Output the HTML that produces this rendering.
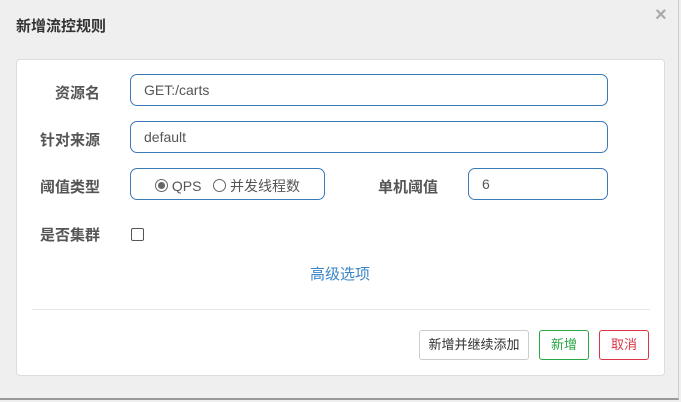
<!DOCTYPE html>
<html><head><meta charset="utf-8"><style>
*{box-sizing:border-box;margin:0;padding:0}
body{width:681px;height:402px;background:#efefef;font-family:"Liberation Sans","Noto Sans CJK SC",sans-serif;position:relative;overflow:hidden;color:#333}
.edge{position:absolute;left:0;top:0;width:679px;height:400px;border-right:1px solid #ccc;border-bottom:2px solid #999;}
.title{position:absolute;left:16px;top:15px;font-size:15px;font-weight:bold;color:#333}
.close{position:absolute;left:655px;top:4px;font-size:20px;color:#aaa;font-weight:bold}
.card{position:absolute;left:16px;top:59px;width:649px;height:317px;background:#fff;border:1px solid #ddd;border-radius:4px}
.lbl{position:absolute;font-size:15px;font-weight:bold;color:#555;text-align:right}
.inp{position:absolute;border:1px solid #3a7ab8;border-radius:7px;height:32px;font-size:14px;color:#555;padding:7px 13px;background:#fff}
.btn{position:absolute;top:330px;height:30px;border-radius:3px;background:#fff;font-size:13px;text-align:center;line-height:28px}
.radio{display:inline-block;width:13px;height:13px;border:1px solid #666;border-radius:50%;vertical-align:-1px;position:relative}
.radio.on::after{content:"";position:absolute;left:2px;top:2px;width:7px;height:7px;border-radius:50%;background:#666}
</style></head><body>
<div class="edge"></div>
<div class="title">新增流控规则</div>
<div class="close">×</div>
<div class="card"></div>
<div class="lbl" style="left:30px;top:82px;width:70px">资源名</div>
<div class="inp" style="left:130px;top:74px;width:478px">GET:/carts</div>
<div class="lbl" style="left:30px;top:129px;width:70px">针对来源</div>
<div class="inp" style="left:130px;top:121px;width:478px">default</div>
<div class="lbl" style="left:30px;top:176px;width:70px">阈值类型</div>
<div class="inp" style="left:130px;top:168px;width:195px;padding:7px 0 0 24px;font-size:14px"><span class="radio on"></span> QPS &nbsp;&nbsp;<span class="radio"></span> 并发线程数</div>
<div class="lbl" style="left:368px;top:176px;width:70px">单机阈值</div>
<div class="inp" style="left:468px;top:168px;width:140px">6</div>
<div class="lbl" style="left:30px;top:224px;width:70px">是否集群</div>
<div style="position:absolute;left:131px;top:228px;width:13px;height:13px;border:1px solid #555;border-radius:2px;background:#fff"></div>
<div style="position:absolute;left:310px;top:263px;font-size:15px;color:#3a85c6">高级选项</div>
<div style="position:absolute;left:32px;top:309px;width:618px;height:1px;background:#e5e5e5"></div>
<div class="btn" style="left:419px;width:110px;border:1px solid #ccc;color:#333">新增并继续添加</div>
<div class="btn" style="left:539px;width:50px;border:1px solid #28a745;color:#28a745">新增</div>
<div class="btn" style="left:599px;width:50px;border:1px solid #dc3545;color:#dc3545">取消</div>
</body></html>
